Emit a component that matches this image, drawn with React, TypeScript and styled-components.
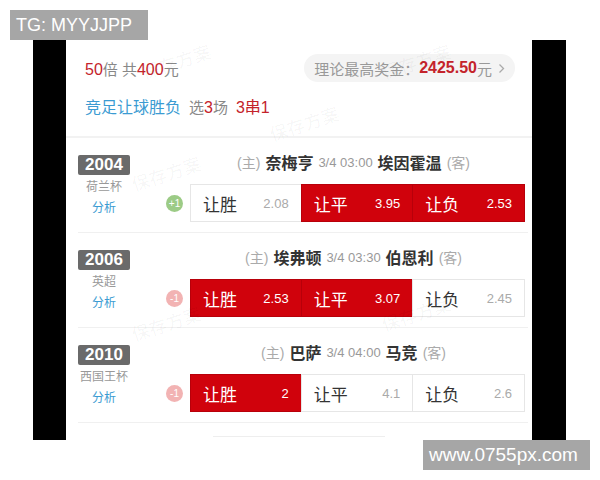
import * as React from "react";
import styled, { createGlobalStyle } from "styled-components";

const GlobalStyle = createGlobalStyle`
  body {
    margin: 0;
    background: #fff;
    font-family: "Liberation Sans", "Noto Sans CJK SC", sans-serif;
  }
`;

const RED = "#d0020c";
const TEXT_RED = "#c4232b";
const GRAY = "#999";

const Page = styled.div`
  position: relative;
  width: 600px;
  height: 480px;
  padding-top: 40px;
  box-sizing: border-box;
  background: #fff;
  overflow: hidden;
`;

const Screen = styled.div`
  margin-left: 33px;
  width: 533px;
  height: 400px;
  box-sizing: border-box;
  padding: 0 34px 0 33px;
  background: #000;
`;

const Phone = styled.div`
  height: 100%;
  background: #fff;
  display: flex;
  flex-direction: column;
`;

// summary block on top
const Summary = styled.div`
  padding: 14px 17px 0 19px;
  height: 98px;
  box-sizing: border-box;
  border-bottom: 2px solid #f2f2f2;
`;

const SummaryTop = styled.div`
  display: flex;
  align-items: center;
  justify-content: space-between;
  height: 28px;
`;

const Plain = styled.span`
  color: #888;
  font-size: 15px;
`;

const RedNum = styled.span<{ $bold?: boolean }>`
  color: ${TEXT_RED};
  font-size: 16px;
  font-weight: ${({ $bold }) => ($bold ? 700 : 400)};
`;

const Pill = styled.div`
  display: flex;
  align-items: center;
  height: 28px;
  padding: 0 10px 0 10px;
  border-radius: 14px;
  background: #f4f4f4;
  color: #999;
  font-size: 15px;
`;

const Chevron = styled.svg`
  margin-left: 6px;
`;

const SummaryBottom = styled.div`
  display: flex;
  align-items: center;
  gap: 8px;
  margin-top: 13px;
  height: 22px;
`;

const Blue = styled.span`
  color: #3b9bd2;
  font-size: 16px;
`;

// match rows
const Match = styled.div`
  display: flex;
  height: 95px;
  box-sizing: border-box;
  padding: 17px 9px 0 0;
  margin: 0 4px 0 12px;
  border-bottom: 1px solid #f0f0f0;
`;

const LeftCol = styled.div`
  width: 52px;
  display: flex;
  flex-direction: column;
  align-items: center;
`;

const Code = styled.div`
  width: 52px;
  height: 20px;
  border-radius: 2px;
  background: #6a6a6a;
  color: #fff;
  font-weight: 700;
  font-size: 17px;
  line-height: 20px;
  text-align: center;
`;

const League = styled.div`
  margin-top: 4px;
  font-size: 12px;
  line-height: 16px;
  color: ${GRAY};
`;

const Analyse = styled.div`
  margin-top: 5px;
  font-size: 12px;
  line-height: 16px;
  color: #3b9bd2;
`;

const RightCol = styled.div`
  flex: 1;
  margin-left: 36px;
  display: flex;
  flex-direction: column;
`;

const Header = styled.div`
  margin-left: 24px;
  height: 22px;
  display: flex;
  align-items: center;
  justify-content: center;
  gap: 5px;
  margin-top: -4px;
  padding-right: 8px;
`;

const Side = styled.span`
  font-size: 14px;
  color: #aaa;
`;

const Team = styled.span`
  font-size: 16px;
  font-weight: 700;
  color: #333;
`;

const Time = styled.span`
  font-size: 13px;
  color: #999;
`;

const OddsLine = styled.div`
  display: flex;
  align-items: center;
  margin-top: 11px;
`;

const Handicap = styled.div<{ $plus: boolean }>`
  width: 17px;
  height: 17px;
  border-radius: 50%;
  margin-right: 7px;
  background: ${({ $plus }) => ($plus ? "#9ccb86" : "#f2b3b3")};
  color: #fff;
  font-size: 10px;
  line-height: 17px;
  text-align: center;
`;

const Odds = styled.div`
  display: grid;
  grid-template-columns: repeat(3, 1fr);
  width: 335px;
  height: 38px;
`;

const Cell = styled.div<{ $on: boolean }>`
  display: flex;
  align-items: center;
  justify-content: space-between;
  padding: 0 12px 0 12px;
  box-sizing: border-box;
  background: ${({ $on }) => ($on ? RED : "#fff")};
  border: 1px solid ${({ $on }) => ($on ? "#b8000a" : "#e6e6e6")};
  margin-left: -1px;
  &:first-child {
    margin-left: 0;
  }
`;

const Label = styled.span<{ $on: boolean }>`
  font-size: 17px;
  color: ${({ $on }) => ($on ? "#fff" : "#333")};
`;

const Price = styled.span<{ $on: boolean }>`
  font-size: 13px;
  color: ${({ $on }) => ($on ? "#fff" : "#aaa")};
`;

const NextCard = styled.div`
  margin: 13px 147px 0 147px;
  border-top: 1px solid #eee;
`;

// overlays
const Tag = styled.div<{ $size: number }>`
  position: absolute;
  height: 30px;
  box-sizing: border-box;
  padding: 0 6px;
  background: #a6a6a6;
  color: #fff;
  font-size: ${({ $size }) => $size}px;
  line-height: 30px;
  font-family: "Liberation Sans", sans-serif;
  white-space: nowrap;
`;

const Mark = styled.div`
  position: absolute;
  font-size: 18px;
  font-weight: 700;
  color: rgba(0, 0, 0, 0.028);
  transform: rotate(-18deg);
  pointer-events: none;
  white-space: nowrap;
`;

type MatchData = {
  code: string;
  league: string;
  home: string;
  away: string;
  time: string;
  hcp: string;
  odds: { label: string; price: string; on: boolean }[];
};

const matches: MatchData[] = [
  {
    code: "2004",
    league: "荷兰杯",
    home: "奈梅亨",
    away: "埃因霍温",
    time: "3/4 03:00",
    hcp: "+1",
    odds: [
      { label: "让胜", price: "2.08", on: false },
      { label: "让平", price: "3.95", on: true },
      { label: "让负", price: "2.53", on: true },
    ],
  },
  {
    code: "2006",
    league: "英超",
    home: "埃弗顿",
    away: "伯恩利",
    time: "3/4 03:30",
    hcp: "-1",
    odds: [
      { label: "让胜", price: "2.53", on: true },
      { label: "让平", price: "3.07", on: true },
      { label: "让负", price: "2.45", on: false },
    ],
  },
  {
    code: "2010",
    league: "西国王杯",
    home: "巴萨",
    away: "马竞",
    time: "3/4 04:00",
    hcp: "-1",
    odds: [
      { label: "让胜", price: "2", on: true },
      { label: "让平", price: "4.1", on: false },
      { label: "让负", price: "2.6", on: false },
    ],
  },
];

export default function App() {
  return (
    <>
      <GlobalStyle />
      <Page>
        <Screen>
          <Phone>
            <Summary>
              <SummaryTop>
                <div>
                  <RedNum>50</RedNum>
                  <Plain>倍 共</Plain>
                  <RedNum>400</RedNum>
                  <Plain>元</Plain>
                </div>
                <Pill>
                  <span>理论最高奖金：</span>
                  <RedNum $bold>2425.50</RedNum>
                  <span>元</span>
                  <Chevron width="7" height="11" viewBox="0 0 7 11">
                    <path d="M1.5 1.5 L5.5 5.5 L1.5 9.5" fill="none" stroke="#aaa" strokeWidth="1.3" />
                  </Chevron>
                </Pill>
              </SummaryTop>
              <SummaryBottom>
                <Blue>竞足让球胜负</Blue>
                <span>
                  <Plain>选</Plain>
                  <RedNum>3</RedNum>
                  <Plain>场</Plain>
                </span>
                <RedNum>3串1</RedNum>
              </SummaryBottom>
            </Summary>

            {matches.map((m) => (
              <Match key={m.code}>
                <LeftCol>
                  <Code>{m.code}</Code>
                  <League>{m.league}</League>
                  <Analyse>分析</Analyse>
                </LeftCol>
                <RightCol>
                  <Header>
                    <Side>(主)</Side>
                    <Team>{m.home}</Team>
                    <Time>{m.time}</Time>
                    <Team>{m.away}</Team>
                    <Side>(客)</Side>
                  </Header>
                  <OddsLine>
                    <Handicap $plus={m.hcp.startsWith("+")}>{m.hcp}</Handicap>
                    <Odds>
                      {m.odds.map((o) => (
                        <Cell key={o.label} $on={o.on}>
                          <Label $on={o.on}>{o.label}</Label>
                          <Price $on={o.on}>{o.price}</Price>
                        </Cell>
                      ))}
                    </Odds>
                  </OddsLine>
                </RightCol>
              </Match>
            ))}
            <NextCard />
          </Phone>
        </Screen>

        <Mark style={{ left: 140, top: 48 }}>保存方案</Mark>
        <Mark style={{ left: 268, top: 110 }}>保存方案</Mark>
        <Mark style={{ left: 380, top: 48 }}>保存方案</Mark>
        <Mark style={{ left: 130, top: 160 }}>保存方案</Mark>
        <Mark style={{ left: 130, top: 310 }}>保存方案</Mark>
        <Mark style={{ left: 380, top: 300 }}>保存方案</Mark>

        <Tag $size={18} style={{ left: 10, top: 10, width: 138 }}>TG: MYYJJPP</Tag>
        <Tag $size={19} style={{ left: 423, top: 440, width: 167 }}>www.0755px.com</Tag>
      </Page>
    </>
  );
}
